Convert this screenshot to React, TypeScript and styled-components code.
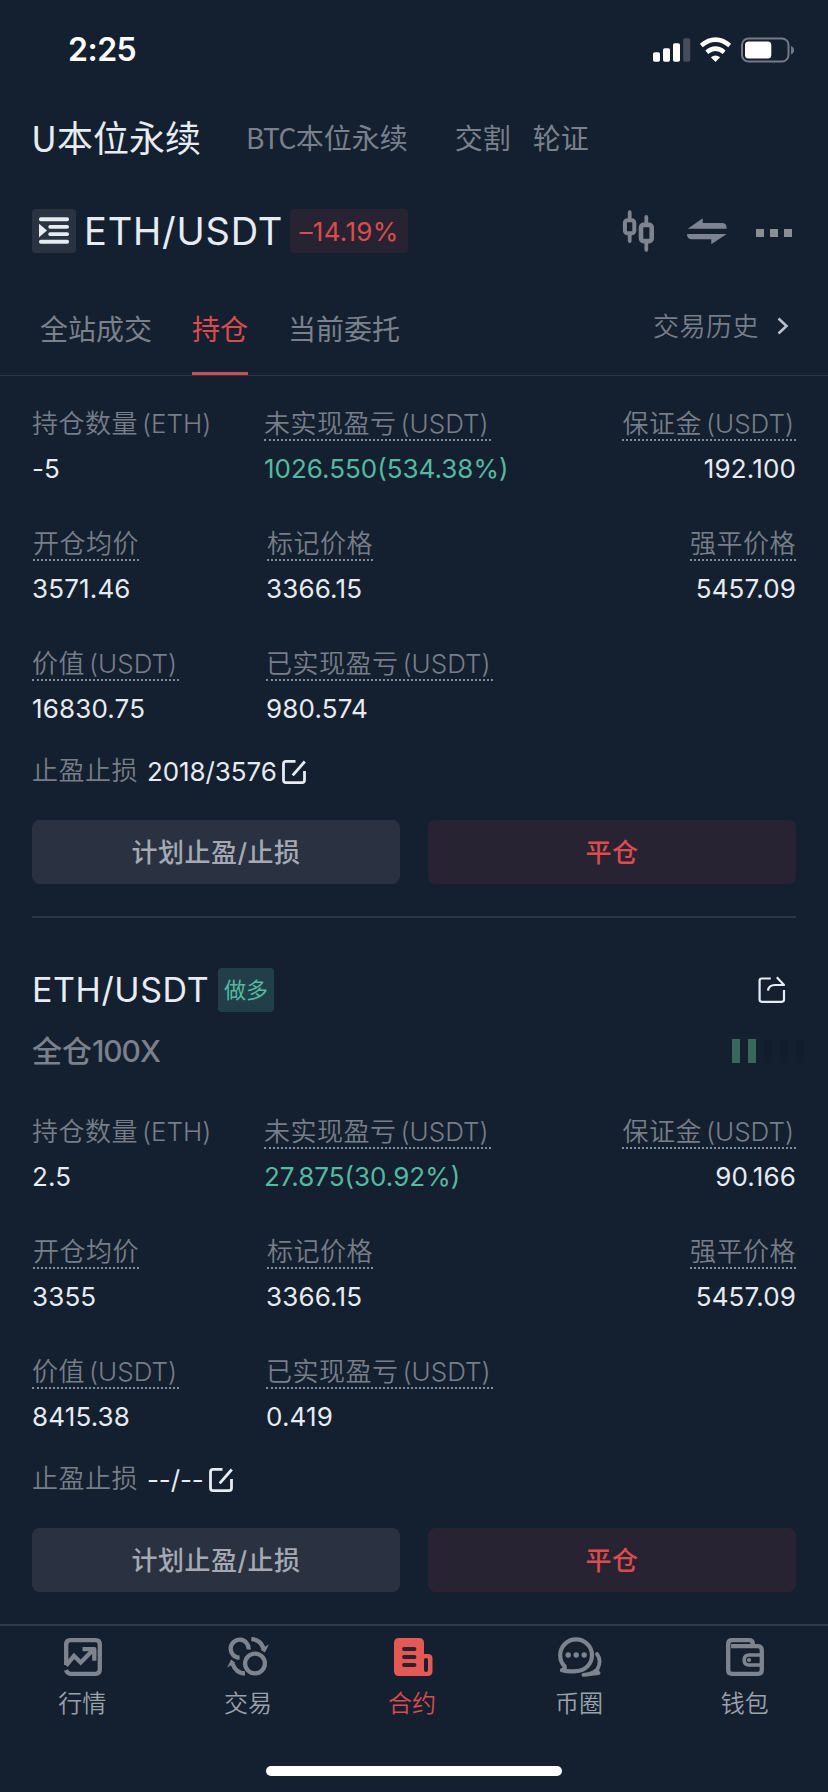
import React from "react";
import styled, { createGlobalStyle } from "styled-components";

const c = {
  bg: "#14202f",
  text: "#e6ebf4",
  muted: "#7a808c",
  label: "#777d89",
  line: "#2b3546",
  red: "#dc4b4d",
  green: "#55b9a1",
};

const Global = createGlobalStyle`
  * { box-sizing: border-box; }
  html, body { margin: 0; padding: 0; background: ${c.bg}; }
  body { font-family: Inter, "Noto Sans CJK SC", sans-serif; color: ${c.text}; }
  svg { display: block; flex: none; }
`;

const Screen = styled.div`
  width: 828px;
  height: 1792px;
  display: flex;
  flex-direction: column;
  overflow: hidden;
  background: ${c.bg};
`;

const StatusBar = styled.header`
  height: 99px;
  flex: none;
  display: flex;
  align-items: center;
  justify-content: space-between;
  padding: 0 34px 0 68px;
`;

const Clock = styled.span`
  font-size: 32px;
  font-weight: 600;
  line-height: 40px;
  color: #fff;
  letter-spacing: -0.5px;
`;

const MarketTabs = styled.nav`
  height: 76px;
  flex: none;
  display: flex;
  align-items: center;
  padding: 0 0 3px 31px;
  font-family: "Noto Sans CJK SC", sans-serif;
`;

const MarketTab = styled.span<{ $active?: boolean; $gap?: number }>`
  font-size: ${(p) => (p.$active ? 36 : 28)}px;
  font-weight: 400;
  line-height: ${(p) => (p.$active ? 44 : 46)}px;
  margin-top: ${(p) => (p.$active ? 0 : 2)}px;
  margin-left: ${(p) => p.$gap ?? 0}px;
  color: ${(p) => (p.$active ? c.text : c.muted)};
`;

const Ticker = styled.span`
  letter-spacing: -0.6px;
`;

const PairBar = styled.div`
  height: 112px;
  flex: none;
  display: flex;
  align-items: center;
  padding: 0 36px 0 32px;
`;

const ListButton = styled.span`
  width: 44px;
  height: 44px;
  border-radius: 4px;
  background: #2a3342;
`;

const PairName = styled.span`
  width: 205px;
  margin-left: 8px;
  font-size: 38px;
  line-height: 44px;
  letter-spacing: 0.8px;
`;

const ChangeBadge = styled.span`
  width: 118px;
  height: 44px;
  margin-left: 1px;
  border-radius: 4px;
  background: #282332;
  color: ${c.red};
  font-size: 26px;
  line-height: 45px;
  letter-spacing: 0.3px;
  text-align: center;
`;

const Tools = styled.div`
  display: flex;
  align-items: center;
  margin-left: auto;
`;

const Swap = styled.span`
  margin-left: 30px;
`;

const Dots = styled.div`
  display: flex;
  gap: 6px;
  margin: 4px 0 0 28px;
`;

const Dot = styled.i`
  width: 8px;
  height: 8px;
  background: #8a8f96;
`;

const OrderTabs = styled.nav`
  height: 89px;
  flex: none;
  display: flex;
  gap: 40px;
  padding: 0 39px 0 40px;
  border-bottom: 1px solid ${c.line};
`;

const OrderTab = styled.span<{ $active?: boolean }>`
  position: relative;
  font-size: 28px;
  line-height: 87px;
  color: ${(p) => (p.$active ? c.red : c.muted)};

  &::after {
    content: "";
    display: ${(p) => (p.$active ? "block" : "none")};
    position: absolute;
    left: 0;
    right: 0;
    bottom: 0;
    height: 3px;
    background: #c64f51;
  }
`;

const History = styled.span`
  display: flex;
  align-items: center;
  gap: 18px;
  height: 75px;
  margin-left: auto;
  font-size: 26px;
  font-weight: 350;
  letter-spacing: 0.5px;
  color: ${c.label};

  svg {
    margin-top: 3px;
  }
`;

const Position = styled.section`
  flex: none;
  padding: 0 32px;
`;

const Grid = styled.div<{ $top: number }>`
  display: flex;
  flex-direction: column;
  gap: 46px;
  padding-top: ${(p) => p.$top}px;
`;

const Row = styled.div<{ $mid?: number }>`
  display: grid;
  grid-template-columns: ${(p) => p.$mid ?? 234}px 1fr auto;
`;

const Cell = styled.div<{ $end?: boolean }>`
  display: flex;
  flex-direction: column;
  align-items: ${(p) => (p.$end ? "flex-end" : "flex-start")};
`;

const Label = styled.span<{ $plain?: boolean; $inset?: number }>`
  height: 32px;
  margin-left: ${(p) => p.$inset ?? 0}px;
  border-bottom: 2px dotted ${(p) => (p.$plain ? "transparent" : "#858b95")};
  font-size: 26px;
  font-weight: 350;
  line-height: 30px;
  letter-spacing: 0.5px;
  color: ${c.label};
  white-space: nowrap;
`;

const Unit = styled.span`
  margin-left: 4px;
  padding-right: 2px;
  letter-spacing: 0;
`;

const Value = styled.span<{ $up?: boolean }>`
  margin-top: 12px;
  font-size: 26px;
  line-height: 31px;
  height: 30px;
  letter-spacing: ${(p) => (p.$up ? 0 : 0.15)}px;
  color: ${(p) => (p.$up ? c.green : c.text)};
`;

const StopRow = styled.div`
  height: 30px;
  display: flex;
  align-items: center;
  margin-top: 34px;
`;

const StopValue = styled.span`
  margin: 0 5px 0 9px;
  font-size: 26px;
  line-height: 30px;
  letter-spacing: -0.1px;
`;

const Actions = styled.div`
  display: grid;
  grid-template-columns: 1fr 1fr;
  gap: 28px;
  margin-top: 33px;
`;

const Action = styled.button<{ $close?: boolean }>`
  height: 64px;
  padding: 0;
  border: 0;
  border-radius: 8px;
  font-family: Inter, "Noto Sans CJK SC", sans-serif;
  font-size: 26px;
  font-weight: 450;
  line-height: 66px;
  letter-spacing: 0.5px;
  background: ${(p) => (p.$close ? "#282332" : "#2a3241")};
  color: ${(p) => (p.$close ? c.red : "#a4a9b3")};
`;

const Divider = styled.hr`
  height: 2px;
  margin: 32px 32px 0;
  border: 0;
  flex: none;
  background: ${c.line};
`;

const PositionHead = styled.div`
  height: 44px;
  display: flex;
  align-items: center;
  margin-top: 50px;
  padding-right: 10px;
`;

const PositionPair = styled.span`
  width: 175px;
  font-size: 34px;
  line-height: 44px;
  letter-spacing: 0.6px;
`;

const SideBadge = styled.span`
  width: 56px;
  height: 44px;
  margin: 0 auto 0 11px;
  border-radius: 4px;
  background: #213e49;
  color: ${c.green};
  font-size: 22px;
  line-height: 45px;
  text-align: center;
`;

const LeverageRow = styled.div`
  height: 30px;
  display: flex;
  align-items: center;
  justify-content: space-between;
  margin-top: 24px;
  margin-right: -8px;
  color: ${c.muted};
  font-size: 30px;
  font-weight: 450;
  line-height: 32px;
`;

const Multiple = styled.span`
  letter-spacing: -1.1px;
`;

const Risk = styled.div`
  display: flex;
  gap: 8px;
`;

const RiskBar = styled.i<{ $on?: boolean }>`
  width: 8px;
  height: 24px;
  background: ${(p) => (p.$on ? "#37695a" : "#131c2b")};
`;

const TabBar = styled.nav`
  height: 140px;
  flex: none;
  display: grid;
  grid-template-columns: repeat(5, 1fr);
  align-items: start;
  margin-top: 32px;
  padding-top: 11px;
  border-top: 2px solid #303a4a;
`;

const TabItem = styled.div<{ $active?: boolean }>`
  display: flex;
  flex-direction: column;
  align-items: center;
  gap: 11px;
  font-size: 24px;
  font-weight: 350;
  line-height: 32px;
  color: ${(p) => (p.$active ? c.red : "#9ba1ac")};
`;

const TabName = styled.span<{ $active?: boolean }>`
  padding-right: ${(p) => (p.$active ? 4 : 1)}px;
`;

const IconSlot = styled.span`
  height: 40px;
  display: flex;
  align-items: center;
`;

const HomeIndicator = styled.div`
  width: 296px;
  height: 10px;
  flex: none;
  margin: 2px auto 0;
  border-radius: 5px;
  background: #fff;
`;

const grey = "#7e848f";

const StatusIcons = () => (
  <svg width="142" height="26" viewBox="652 36.5 142 26">
    <g fill="#fff">
      <rect x="653" y="51.7" width="7" height="9.5" rx="1.8" />
      <rect x="663" y="47.7" width="7" height="13.5" rx="1.8" />
      <rect x="673" y="42.7" width="7" height="18.5" rx="1.8" />
      <rect x="683.2" y="37.7" width="7" height="23.5" rx="1.8" fill="#474e5b" />
      <path d="M715.5 61.4l-4.6-4.7q4.6-3.6 9.2 0z" />
    </g>
    <g fill="none" stroke="#fff" strokeWidth="4.5">
      <path d="M701.3 45.1q14.2-11.8 28.4 0" />
      <path d="M706.8 51.7q8.7-7.1 17.4 0" />
    </g>
    <rect x="742" y="38" width="46.5" height="23" rx="6.5" fill="none" stroke="#747b87" strokeWidth="2" />
    <rect x="745" y="41" width="26.3" height="17" rx="3.5" fill="#fff" />
    <path d="M791 45.5q3 1.2 3 4.2t-3 4.2z" fill="#747b87" />
  </svg>
);

const ListIcon = () => (
  <svg width="44" height="44" viewBox="0 0 44 44" fill={c.text}>
    <rect x="7" y="8.3" width="30" height="4" rx="1.8" />
    <rect x="16.3" y="16" width="20.7" height="3.8" rx="1.8" />
    <rect x="16.3" y="23.3" width="20.7" height="3.8" rx="1.8" />
    <rect x="7" y="30.8" width="30" height="4" rx="1.8" />
    <path d="M7 14.7l8 6.8-8 6.8z" />
  </svg>
);

const CandleIcon = () => (
  <svg width="34" height="46" viewBox="621 208 34 46" fill="none" stroke={grey} strokeLinecap="round">
    <path strokeWidth="3.8" d="M628.7 212.2v7M628.7 235v6M645.3 217v6M645.3 243v6.8" />
    <rect x="623.9" y="220.3" width="9.4" height="13" rx="2.5" strokeWidth="4" />
    <rect x="640" y="224.9" width="10.7" height="16.2" rx="2.5" strokeWidth="4.6" />
  </svg>
);

const SwapIcon = () => (
  <svg width="42" height="30" viewBox="685 216 42 30" fill={grey}>
    <path d="M686.7 228.7l15-10.4v4.8h20q4 .3 4 5.6z" />
    <path d="M725.7 234l-15.4 10.2v-4.9h-20q-4.3-.3-4.3-5.3z" />
  </svg>
);

const Chevron = () => (
  <svg width="12" height="18" viewBox="0 0 12 18" fill="none" stroke="#b9bec9" strokeWidth="2.6">
    <path d="M1.5 1.5L9.5 9l-8 7.5" />
  </svg>
);

const EditIcon = () => (
  <svg width="24" height="24" viewBox="0 0 24 24" fill="none" stroke={c.text} strokeWidth="2.8">
    <path d="M13.5 1.4H4Q1.5 1.4 1.5 4v16q0 2.6 2.5 2.6h16q2.5 0 2.5-2.6v-9M22.8 1.5L10.7 15.3" />
  </svg>
);

const ShareIcon = () => (
  <svg width="28" height="28" viewBox="758 976.5 28 28" fill="none" stroke={c.text} strokeWidth="2.2" strokeLinejoin="round">
    <path d="M770.8 979h-9q-2.2 0-2.2 2.2v18.9q0 2.2 2.2 2.2h20q2.2 0 2.2-2.2v-9.6" />
    <path d="M768 991.2q.5-5.700 7-5.700h9l-7.200-7.700" />
  </svg>
);

const MarketIcon = () => (
  <svg width="38" height="38" viewBox="0 0 38 38" fill="none" stroke={grey} strokeWidth="4.3">
    <path d="M2.2 27V6.5q0-4.3 4.3-4.3h25q4.3 0 4.3 4.3v25q0 4.3-4.3 4.3h-25Q3.3 35.8 2 32" />
    <path d="M2 27.5l8-9.5 6.7 6.5L29.5 11.5" />
    <path d="M18.5 11.2h11.8v11.5" strokeLinejoin="round" />
  </svg>
);

const TradeIcon = () => (
  <svg width="42" height="40" viewBox="0 1 42 40" fill="none" stroke={grey} strokeWidth="4.3">
    <circle cx="28" cy="27.5" r="9.9" />
    <path d="M21.6 13.5a9 9 0 1 0-9 8.2M24.3 3.2q9 .3 12.2 9.3M18 37.5q-9-.2-12.3-9.5" />
    <path d="M40 10.5l-5 3.2 2.6 1.7zM2 29.6l5-3-2.6-1.9z" fill={grey} strokeWidth="1.5" />
  </svg>
);

const ContractIcon = () => (
  <svg width="39" height="38" viewBox="0 0 39 38">
    <path
      fill="#e55954"
      fillRule="evenodd"
      d="M5 0h20q5 0 5 5v11h4q4.500 0 4.500 4.500V33q0 5-5 5H5q-5 0-5-5V5q0-5 5-5zM32 20q-2 0-2 2v10q0 2 2 2t2-2V22q0-2-2-2z"
    />
    <path stroke="#2c2130" strokeWidth="3.8" strokeLinecap="round" d="M10 11h10.500M10 19h10.500M10 27h10.500" />
  </svg>
);

const ChatIcon = () => (
  <svg width="46" height="40" viewBox="0 1 46 40" fill="none" stroke={grey} strokeLinecap="round" strokeLinejoin="round">
    <path d="M7.500 30Q3.200 26 3.200 19.200a15.900 15.900 0 1 1 16 15.900Q12 36 5 34.300q3.500-1.200 2.500-4.300z" strokeWidth="4.2" />
    <path d="M40 18q5 6.500.5 15-.8 2.500 1 4l-15 1.900q7.500-.2 13-4.900" strokeWidth="3.8" />
    <g fill={grey} stroke="none">
      <circle cx="11.2" cy="19" r="2.7" />
      <circle cx="19.2" cy="19" r="2.7" />
      <circle cx="27.2" cy="19" r="2.7" />
    </g>
  </svg>
);

const WalletIcon = () => (
  <svg width="38" height="38" viewBox="0 0 38 38" fill="none" stroke={grey} strokeWidth="4.3">
    <path d="M2.2 8v24q0 3.8 3.8 3.8h26q3.8 0 3.8-3.8V12q0-3.8-3.8-3.8H5M2.2 9V6q0-3.8 3.8-3.8h17q3.8 0 3.8 3.8v2.5" />
    <path d="M36 17H23q-4.8 0-4.8 5t4.8 5h13" strokeWidth="3.6" />
    <circle cx="23" cy="22" r="2.1" fill={grey} stroke="none" />
  </svg>
);

type Item = { label: string; unit?: string; value: string; plain?: boolean; up?: boolean; inset?: number };
type Line = { mid?: number; items: Item[] };

const buildLines = (size: string, pnl: string, margin: string, entry: string, worth: string, realized: string): Line[] => [
  {
    mid: 232,
    items: [
      { label: "持仓数量", unit: "(ETH)", value: size, plain: true },
      { label: "未实现盈亏", unit: "(USDT)", value: pnl, up: true },
      { label: "保证金", unit: "(USDT)", value: margin },
    ],
  },
  {
    items: [
      { label: "开仓均价", value: entry, inset: 1 },
      { label: "标记价格", value: "3366.15", inset: 1 },
      { label: "强平价格", value: "5457.09" },
    ],
  },
  {
    items: [
      { label: "价值", unit: "(USDT)", value: worth },
      { label: "已实现盈亏", unit: "(USDT)", value: realized },
    ],
  },
];

const Details = ({ top, lines, stop }: { top: number; lines: Line[]; stop: string }) => (
  <>
    <Grid $top={top}>
      {lines.map((line, i) => (
        <Row key={i} $mid={line.mid}>
          {line.items.map((it, j) => (
            <Cell key={it.label} $end={j === 2}>
              <Label $plain={it.plain} $inset={it.inset}>
                {it.label}
                {it.unit && <Unit>{it.unit}</Unit>}
              </Label>
              <Value $up={it.up}>{it.value}</Value>
            </Cell>
          ))}
        </Row>
      ))}
    </Grid>
    <StopRow>
      <Label $plain>止盈止损</Label>
      <StopValue>{stop}</StopValue>
      <EditIcon />
    </StopRow>
    <Actions>
      <Action>计划止盈/止损</Action>
      <Action $close>平仓</Action>
    </Actions>
  </>
);

const tabs = [
  { name: "行情", icon: <MarketIcon /> },
  { name: "交易", icon: <TradeIcon /> },
  { name: "合约", icon: <ContractIcon />, active: true },
  { name: "币圈", icon: <ChatIcon /> },
  { name: "钱包", icon: <WalletIcon /> },
];

export default function App() {
  return (
    <Screen>
      <Global />
      <StatusBar>
        <Clock>2:25</Clock>
        <StatusIcons />
      </StatusBar>
      <MarketTabs>
        <MarketTab $active>U本位永续</MarketTab>
        <MarketTab $gap={45}>
          <Ticker>BTC</Ticker>本位永续
        </MarketTab>
        <MarketTab $gap={47}>交割</MarketTab>
        <MarketTab $gap={22}>轮证</MarketTab>
      </MarketTabs>
      <PairBar>
        <ListButton>
          <ListIcon />
        </ListButton>
        <PairName>ETH/USDT</PairName>
        <ChangeBadge>–14.19%</ChangeBadge>
        <Tools>
          <CandleIcon />
          <Swap>
            <SwapIcon />
          </Swap>
          <Dots>
            <Dot />
            <Dot />
            <Dot />
          </Dots>
        </Tools>
      </PairBar>
      <OrderTabs>
        <OrderTab>全站成交</OrderTab>
        <OrderTab $active>持仓</OrderTab>
        <OrderTab>当前委托</OrderTab>
        <History>
          交易历史
          <Chevron />
        </History>
      </OrderTabs>
      <Position>
        <Details
          top={33}
          lines={buildLines("-5", "1026.550(534.38%)", "192.100", "3571.46", "16830.75", "980.574")}
          stop="2018/3576"
        />
      </Position>
      <Divider />
      <Position>
        <PositionHead>
          <PositionPair>ETH/USDT</PositionPair>
          <SideBadge>做多</SideBadge>
          <ShareIcon />
        </PositionHead>
        <LeverageRow>
          <span>
            全仓<Multiple>100X</Multiple>
          </span>
          <Risk>
            <RiskBar $on />
            <RiskBar $on />
            <RiskBar />
            <RiskBar />
            <RiskBar />
          </Risk>
        </LeverageRow>
        <Details
          top={51}
          lines={buildLines("2.5", "27.875(30.92%)", "90.166", "3355", "8415.38", "0.419")}
          stop="--/--"
        />
      </Position>
      <TabBar>
        {tabs.map((t) => (
          <TabItem key={t.name} $active={t.active}>
            <IconSlot>{t.icon}</IconSlot>
            <TabName $active={t.active}>{t.name}</TabName>
          </TabItem>
        ))}
      </TabBar>
      <HomeIndicator />
    </Screen>
  );
}
